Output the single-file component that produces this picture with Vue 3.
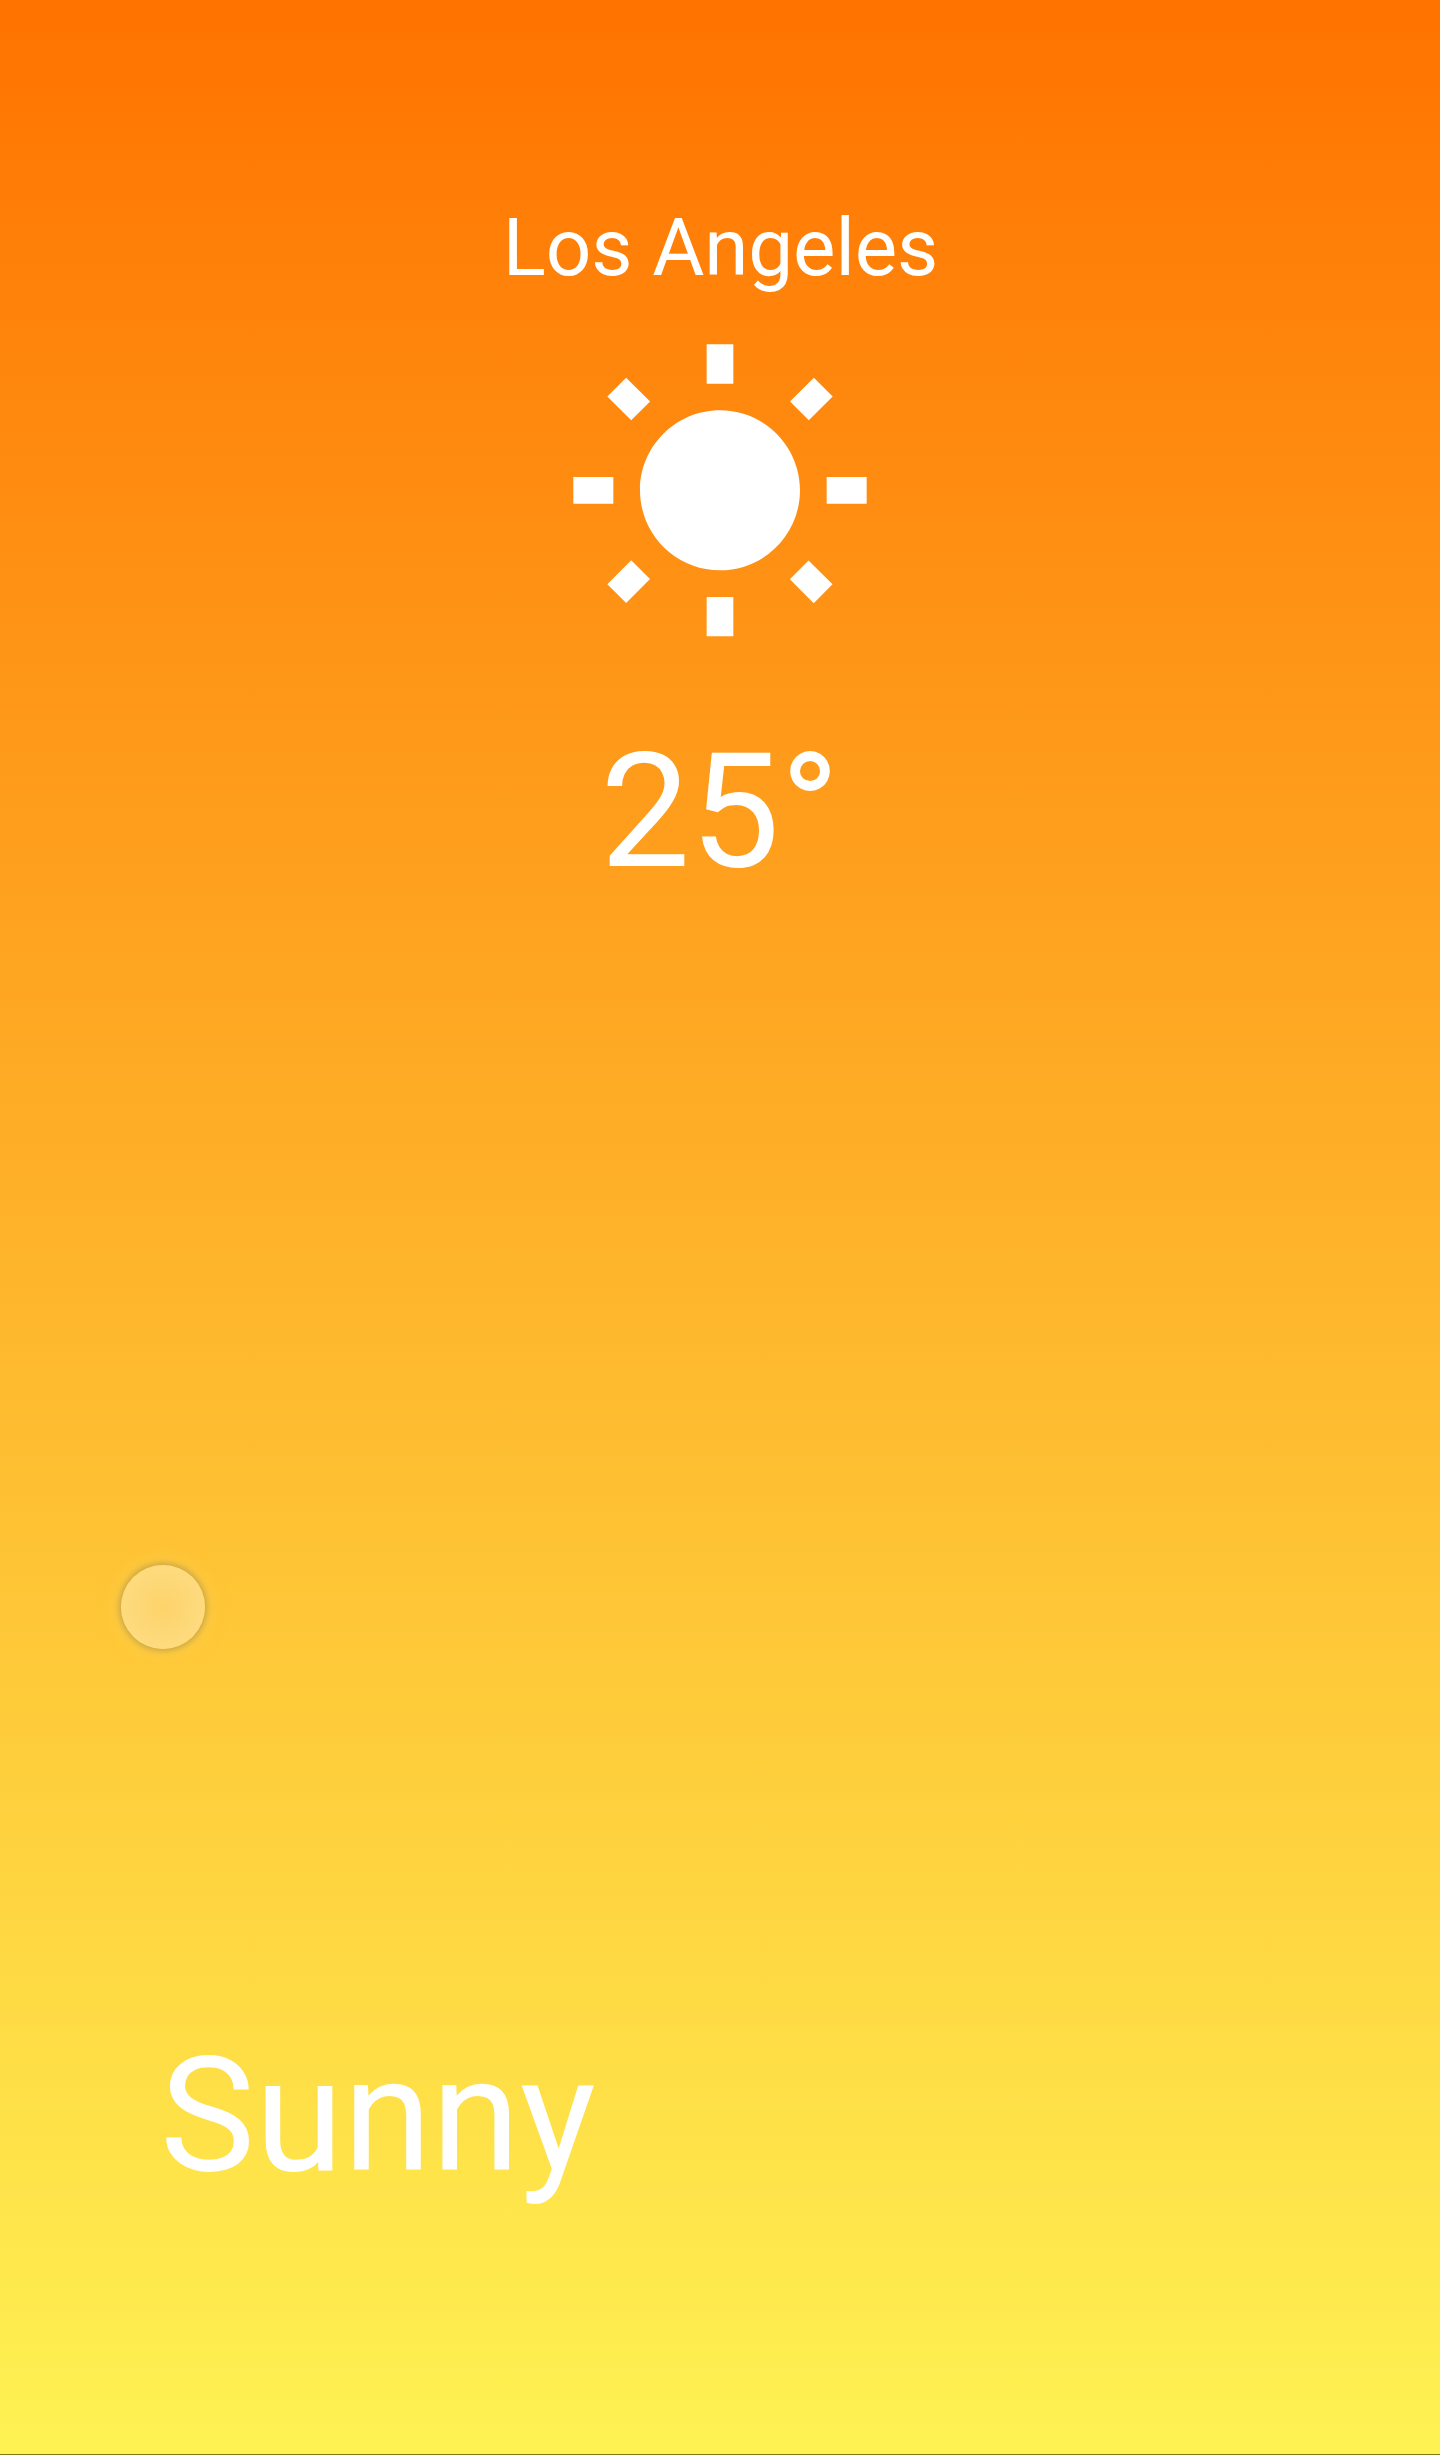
<script setup>
const weather = { city: 'Los Angeles', temperature: 25, condition: 'Sunny' }
</script>

<template>
  <main class="weather">
    <h1 class="city">{{ weather.city }}</h1>
    <svg class="icon" viewBox="0 0 24 24" aria-hidden="true">
      <path d="M6.76 4.84l-1.8-1.79-1.41 1.41 1.79 1.79 1.42-1.41zM4 10.5H1v2h3v-2zm9-9.95h-2V3.5h2V.55zm7.45 3.91l-1.41-1.41-1.79 1.79 1.41 1.41 1.79-1.79zm-3.21 13.7l1.79 1.8 1.41-1.41-1.8-1.79-1.4 1.4zM20 10.5v2h3v-2h-3zm-8-5c-3.31 0-6 2.69-6 6s2.69 6 6 6 6-2.69 6-6-2.69-6-6-6zm-1 16.95h2V19.5h-2v2.95zm-7.45-3.91l1.41 1.41 1.79-1.8-1.41-1.41-1.79 1.8z" />
    </svg>
    <p class="temperature">{{ weather.temperature }}°</p>
    <p class="condition">{{ weather.condition }}</p>
    <span class="touch"></span>
  </main>
</template>

<style>
body {
  margin: 0;
}
</style>

<style scoped>
.weather {
  position: relative;
  box-sizing: border-box;
  height: 2455px;
  padding: 201px 160px 244px;
  display: flex;
  flex-direction: column;
  align-items: center;
  overflow: hidden;
  color: #fff;
  font-family: Roboto, sans-serif;
  background: linear-gradient(#ff7300, #fef253);
  border-bottom: 1px solid #827b15;
}
.city,
.temperature,
.condition {
  margin: 0;
  font-weight: 400;
}
.city {
  padding-left: 1px;
  font-size: 80px;
  line-height: 94px;
  letter-spacing: -0.1px;
}
.icon {
  width: 320px;
  height: 320px;
  margin-top: 42px;
  fill: currentColor;
  flex: none;
}
.temperature {
  margin-top: 61px;
  font-size: 160px;
  line-height: 188px;
}
.condition {
  margin-top: auto;
  align-self: flex-start;
  font-size: 160px;
  line-height: 188px;
}
.touch {
  position: absolute;
  left: 121px;
  top: 1565px;
  width: 84px;
  height: 84px;
  border-radius: 50%;
  background: radial-gradient(circle closest-side, #fdd36a, #fedb7f);
  box-shadow: 0 0 6px 2px rgba(176, 145, 70, 0.7), 0 0 16px 6px rgba(255, 215, 90, 0.5);
}
</style>
